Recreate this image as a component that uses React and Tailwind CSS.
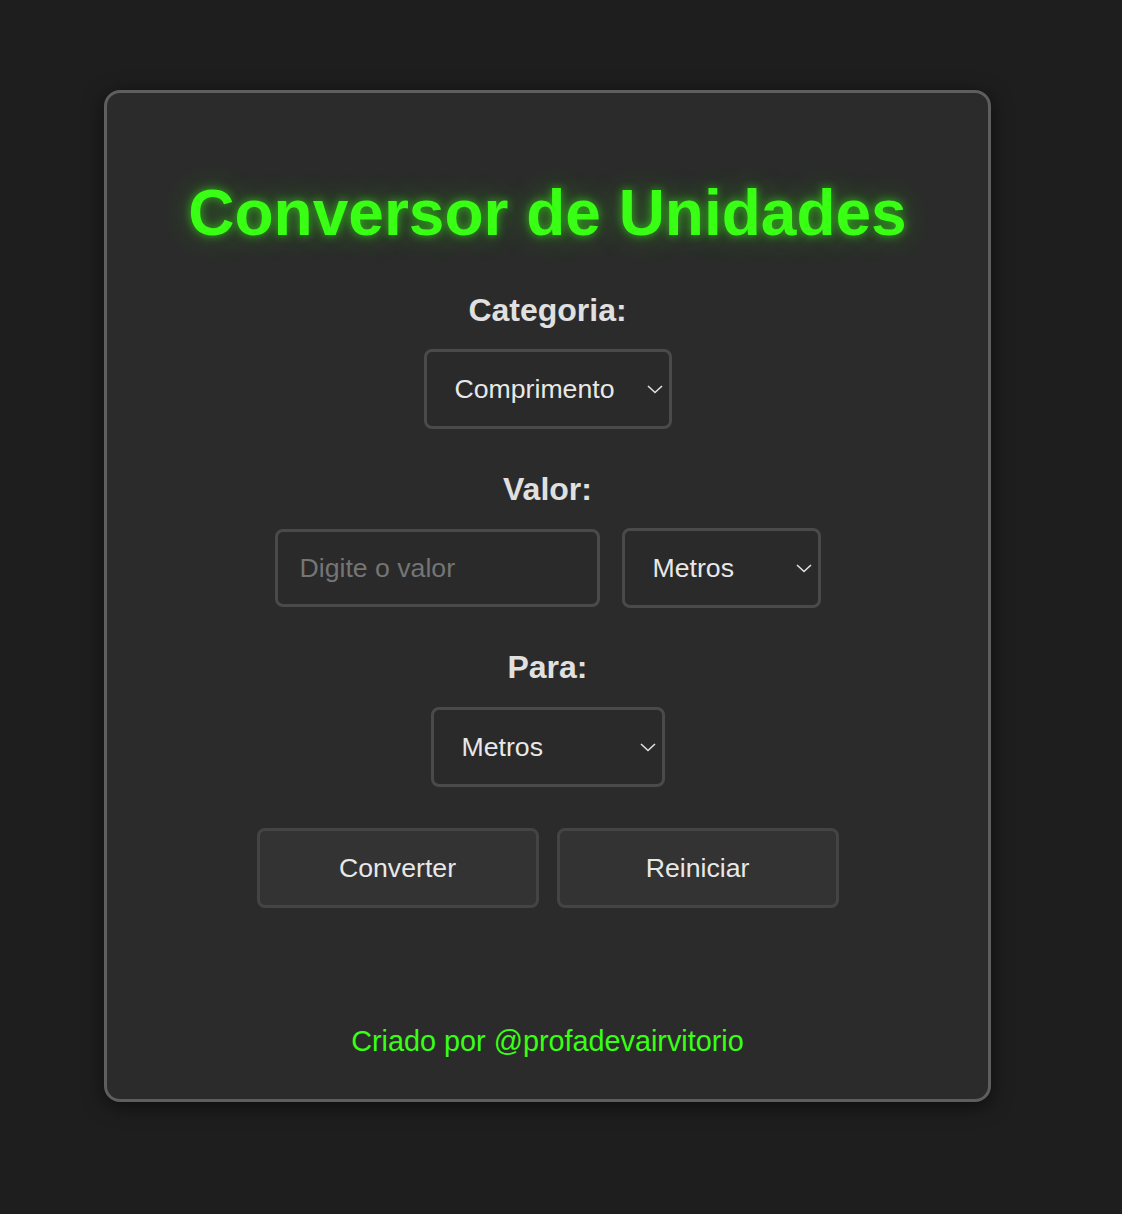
import React, { useState } from "react";

const font = { fontFamily: '"Liberation Sans", Arial, sans-serif' };

function Chevron() {
  return (
    <svg
      className="pointer-events-none absolute right-[8px] top-1/2 -translate-y-1/2"
      width="18"
      height="10"
      viewBox="0 0 18 10"
      fill="none"
    >
      <path d="M2 2l7 6.5L16 2" stroke="#e0e0e0" strokeWidth="1.6" />
    </svg>
  );
}

function Select({ value, onChange, options, width }) {
  return (
    <div className={`relative ${width}`}>
      <select
        value={value}
        onChange={(e) => onChange(e.target.value)}
        className="h-[80px] w-full appearance-none rounded-[8px] border-[3px] border-[#4a4a4a] bg-[#2a2a2a] pl-[28px] pr-[40px] text-[26.67px] text-[#e8e8e8] outline-none"
      >
        {options.map((o) => (
          <option key={o}>{o}</option>
        ))}
      </select>
      <Chevron />
    </div>
  );
}

export default function App() {
  const [cat, setCat] = useState("Comprimento");
  const [from, setFrom] = useState("Metros");
  const [to, setTo] = useState("Metros");
  const [val, setVal] = useState("");

  const units = ["Metros", "Quilômetros", "Centímetros"];

  return (
    <div className="min-h-screen bg-[#1e1e1e] pt-[90px] pb-[113px]" style={font}>
      <div className="ml-[104px] w-[887px] rounded-[16px] border-[3px] border-[#5e5e5e] bg-[#2b2b2b] shadow-[0_4px_20px_rgba(0,0,0,0.55)] flex flex-col items-center pt-[83px] pb-[41px]">
        <h1 className="text-[64px] leading-[74px] font-bold text-[#39ff14] [text-shadow:0_0_10px_rgba(57,255,20,0.6),0_0_30px_rgba(57,255,20,0.35)]">
          Conversor de Unidades
        </h1>

        <label className="mt-[42px] text-[32px] leading-[37px] font-bold text-[#e0e0e0]">
          Categoria:
        </label>
        <div className="mt-[20px]">
          <Select
            value={cat}
            onChange={setCat}
            options={["Comprimento", "Massa", "Temperatura"]}
            width="w-[248px]"
          />
        </div>

        <label className="mt-[42px] text-[32px] leading-[37px] font-bold text-[#e0e0e0]">
          Valor:
        </label>
        <div className="mt-[20px] flex items-center gap-[22px]">
          <input
            value={val}
            onChange={(e) => setVal(e.target.value)}
            placeholder="Digite o valor"
            className="h-[78px] w-[325px] rounded-[8px] border-[3px] border-[#4a4a4a] bg-[#2a2a2a] px-[22px] text-[26.67px] text-[#e8e8e8] outline-none placeholder:text-[#757575]"
          />
          <Select value={from} onChange={setFrom} options={units} width="w-[199px]" />
        </div>

        <label className="mt-[41px] text-[32px] leading-[37px] font-bold text-[#e0e0e0]">
          Para:
        </label>
        <div className="mt-[21px]">
          <Select value={to} onChange={setTo} options={units} width="w-[234px]" />
        </div>

        <div className="mt-[41px] flex gap-[18px]">
          <button className="h-[80px] w-[282px] rounded-[8px] border-[3px] border-[#444] bg-[#333] text-[26.67px] text-[#e8e8e8]">
            Converter
          </button>
          <button
            onClick={() => setVal("")}
            className="h-[80px] w-[282px] rounded-[8px] border-[3px] border-[#444] bg-[#333] text-[26.67px] text-[#e8e8e8]"
          >
            Reiniciar
          </button>
        </div>

        <p className="mt-[117px] text-[28.8px] leading-[33px] text-[#39ff14]">
          Criado por @profadevairvitorio
        </p>
      </div>
    </div>
  );
}
